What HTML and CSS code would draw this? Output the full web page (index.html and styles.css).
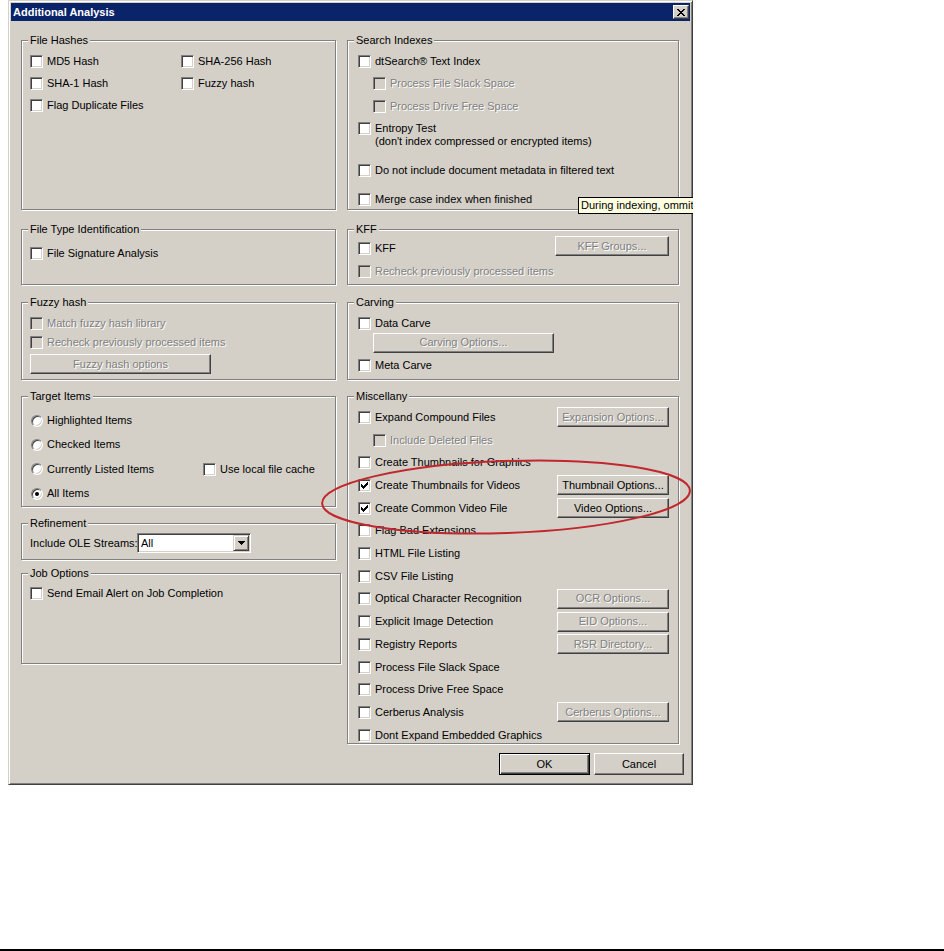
FILE: index.html
```html
<!DOCTYPE html>
<html lang="en">
<head>
    <meta charset="UTF-8">
    <title>Additional Analysis</title>
    <link rel="stylesheet" href="styles.css">
</head>
<body>
    <div class="shot">
        <div class="dialog">
            <div class="titlebar">
                <span class="title">Additional Analysis</span>
                <button class="close" type="button">
                    <svg width="8" height="7" viewBox="0 0 8 7" shape-rendering="crispEdges"><path d="M0 0h2v1H0zM6 0h2v1H6zM1 1h2v1H1zM5 1h2v1H5zM2 2h4v1H2zM3 3h2v1H3zM2 4h4v1H2zM1 5h2v1H1zM5 5h2v1H5zM0 6h2v1H0zM6 6h2v1H6z" fill="#000"/></svg>
                </button>
            </div>

            <div class="body">
                <div class="columns">
                    <!-- left column -->
                    <div class="col col-left">
                        <div class="group hashes">
                            <span class="legend">File Hashes</span>
                            <div class="gbody">
                                <div class="two">
                                    <div class="row"><span class="cb"></span><span class="txt">MD5 Hash</span></div>
                                    <div class="row"><span class="cb"></span><span class="txt">SHA-256 Hash</span></div>
                                    <div class="row"><span class="cb"></span><span class="txt">SHA-1 Hash</span></div>
                                    <div class="row"><span class="cb"></span><span class="txt">Fuzzy hash</span></div>
                                </div>
                                <div class="row"><span class="cb"></span><span class="txt">Flag Duplicate Files</span></div>
                            </div>
                        </div>

                        <div class="group ftype">
                            <span class="legend">File Type Identification</span>
                            <div class="gbody">
                                <div class="row"><span class="cb"></span><span class="txt">File Signature Analysis</span></div>
                            </div>
                        </div>

                        <div class="group fuzzy">
                            <span class="legend">Fuzzy hash</span>
                            <div class="gbody">
                                <div class="row"><span class="cb off"></span><span class="txt dis">Match fuzzy hash library</span></div>
                                <div class="row"><span class="cb off"></span><span class="txt dis">Recheck previously processed items</span></div>
                                <button class="btn dis opt-btn" type="button">Fuzzy hash options</button>
                            </div>
                        </div>

                        <div class="group target">
                            <span class="legend">Target Items</span>
                            <div class="gbody">
                                <div class="row"><span class="radio"></span><span class="txt">Highlighted Items</span></div>
                                <div class="row"><span class="radio"></span><span class="txt">Checked Items</span></div>
                                <div class="row"><span class="radio"></span><span class="txt wide">Currently Listed Items</span><span class="cb"></span><span class="txt">Use local file cache</span></div>
                                <div class="row"><span class="radio on"></span><span class="txt">All Items</span></div>
                            </div>
                        </div>

                        <div class="group refine">
                            <span class="legend">Refinement</span>
                            <div class="gbody">
                                <div class="row">
                                    <span class="field-label">Include OLE Streams:</span>
                                    <div class="combo">
                                        <span class="combo-value">All</span>
                                        <span class="combo-arrow">
                                            <svg width="7" height="4" viewBox="0 0 7 4" shape-rendering="crispEdges"><path d="M0 0h7v1H0zM1 1h5v1H1zM2 2h3v1H2zM3 3h1v1H3z" fill="#000"/></svg>
                                        </span>
                                    </div>
                                </div>
                            </div>
                        </div>

                        <div class="group job">
                            <span class="legend">Job Options</span>
                            <div class="gbody">
                                <div class="row"><span class="cb"></span><span class="txt">Send Email Alert on Job Completion</span></div>
                            </div>
                        </div>
                    </div>

                    <!-- right column -->
                    <div class="col col-right">
                        <div class="group search">
                            <span class="legend">Search Indexes</span>
                            <div class="gbody">
                                <div class="row"><span class="cb"></span><span class="txt">dtSearch® Text Index</span></div>
                                <div class="row indent"><span class="cb off"></span><span class="txt dis">Process File Slack Space</span></div>
                                <div class="row indent"><span class="cb off"></span><span class="txt dis">Process Drive Free Space</span></div>
                                <div class="row multi"><span class="cb"></span><span class="txt">Entropy Test<br>(don't index compressed or encrypted items)</span></div>
                                <div class="row meta"><span class="cb"></span><span class="txt">Do not include document metadata in filtered text</span></div>
                                <div class="row merge"><span class="cb"></span><span class="txt">Merge case index when finished</span></div>
                            </div>
                        </div>

                        <div class="group kff">
                            <span class="legend">KFF</span>
                            <div class="gbody">
                                <div class="split">
                                    <div class="check-top"><span class="cb"></span><span class="txt">KFF</span></div>
                                    <button class="btn dis kff-btn" type="button">KFF Groups...</button>
                                </div>
                                <div class="row"><span class="cb off"></span><span class="txt dis">Recheck previously processed items</span></div>
                            </div>
                        </div>

                        <div class="group carving">
                            <span class="legend">Carving</span>
                            <div class="gbody">
                                <div class="row"><span class="cb"></span><span class="txt">Data Carve</span></div>
                                <button class="btn dis opt-btn" type="button">Carving Options...</button>
                                <div class="row"><span class="cb"></span><span class="txt">Meta Carve</span></div>
                            </div>
                        </div>

                        <div class="group misc">
                            <span class="legend">Miscellany</span>
                            <div class="gbody">
                                <div class="row"><span class="cb"></span><span class="txt">Expand Compound Files</span><button class="btn dis side-btn" type="button">Expansion Options...</button></div>
                                <div class="row indent"><span class="cb off"></span><span class="txt dis">Include Deleted Files</span></div>
                                <div class="row"><span class="cb"></span><span class="txt">Create Thumbnails for Graphics</span></div>
                                <div class="row"><span class="cb"><svg width="11" height="11" viewBox="0 0 11 11" shape-rendering="crispEdges"><path d="M2 4h1v3H2zM3 5h1v3H3zM4 6h1v3H4zM5 5h1v3H5zM6 4h1v3H6zM7 3h1v3H7zM8 2h1v3H8z" fill="#000"/></svg></span><span class="txt">Create Thumbnails for Videos</span><button class="btn side-btn" type="button">Thumbnail Options...</button></div>
                                <div class="row"><span class="cb"><svg width="11" height="11" viewBox="0 0 11 11" shape-rendering="crispEdges"><path d="M2 4h1v3H2zM3 5h1v3H3zM4 6h1v3H4zM5 5h1v3H5zM6 4h1v3H6zM7 3h1v3H7zM8 2h1v3H8z" fill="#000"/></svg></span><span class="txt">Create Common Video File</span><button class="btn side-btn" type="button">Video Options...</button></div>
                                <div class="row"><span class="cb"></span><span class="txt">Flag Bad Extensions</span></div>
                                <div class="row"><span class="cb"></span><span class="txt">HTML File Listing</span></div>
                                <div class="row"><span class="cb"></span><span class="txt">CSV File Listing</span></div>
                                <div class="row"><span class="cb"></span><span class="txt">Optical Character Recognition</span><button class="btn dis side-btn" type="button">OCR Options...</button></div>
                                <div class="row"><span class="cb"></span><span class="txt">Explicit Image Detection</span><button class="btn dis side-btn" type="button">EID Options...</button></div>
                                <div class="row"><span class="cb"></span><span class="txt">Registry Reports</span><button class="btn dis side-btn" type="button">RSR Directory...</button></div>
                                <div class="row"><span class="cb"></span><span class="txt">Process File Slack Space</span></div>
                                <div class="row"><span class="cb"></span><span class="txt">Process Drive Free Space</span></div>
                                <div class="row"><span class="cb"></span><span class="txt">Cerberus Analysis</span><button class="btn dis side-btn" type="button">Cerberus Options...</button></div>
                                <div class="row"><span class="cb"></span><span class="txt">Dont Expand Embedded Graphics</span></div>
                            </div>
                        </div>
                    </div>
                </div>

                <div class="footer">
                    <button class="btn default" type="button">OK</button>
                    <button class="btn" type="button">Cancel</button>
                </div>
            </div>
        </div>

        <div class="tip">During indexing, ommit</div>

        <svg class="ring" width="693" height="785" viewBox="0 0 693 785">
            <ellipse cx="506" cy="497" rx="184" ry="36" transform="rotate(-2 506 497)" fill="none" stroke="#c1272d" stroke-width="2"/>
        </svg>
    </div>

    <div class="rule"></div>
</body>
</html>
```

FILE: styles.css
```css
* {
    box-sizing: border-box;
}

body {
    margin: 0;
    height: 951px;
    display: flex;
    flex-direction: column;
    background: #fff;
    color: #000;
    font-family: "Liberation Sans", Arial, sans-serif;
    font-size: 11px;
    line-height: 13px;
}

.shot {
    position: relative;
    width: 693px;
    overflow: hidden;
}

/* window frame */
.dialog {
    margin-left: 8px;
    width: 685px;
    height: 785px;
    padding: 2px;
    background: #d4d0c8;
    border: 1px solid;
    border-color: #d4d0c8 #404040 #404040 #d4d0c8;
    box-shadow: inset 1px 1px 0 #fff, inset -1px -1px 0 #808080;
}

.titlebar {
    height: 18px;
    display: flex;
    align-items: center;
    padding-left: 2px;
    background: #0a246a;
    color: #fff;
    font-weight: bold;
}

.close {
    margin-left: auto;
    margin-right: 1px;
    width: 16px;
    height: 14px;
    padding: 0;
    display: flex;
    align-items: center;
    justify-content: center;
    background: #d4d0c8;
    border: 1px solid;
    border-color: #fff #404040 #404040 #fff;
    box-shadow: inset -1px -1px 0 #808080;
}

.close svg {
    display: block;
}

.body {
    padding: 19px 0 0 10px;
}

.columns {
    display: flex;
    align-items: flex-start;
    gap: 11px;
}

.col {
    display: flex;
    flex-direction: column;
}

.col-left { width: 315px; }
.col-right { width: 332px; }

/* etched group boxes */
.group {
    border: 1px solid #808080;
    box-shadow: inset 1px 1px 0 #fff, 1px 1px 0 #fff;
}

.legend {
    display: block;
    width: fit-content;
    height: 13px;
    margin: -7px 0 0 6px;
    padding: 0 2px;
    background: #d4d0c8;
}

.gbody {
    padding: 0 9px 0 8px;
}

.col-right .gbody {
    padding-left: 10px;
}

.hashes, .search { height: 170px; }
.ftype, .kff { height: 56px; margin-top: 19px; }
.fuzzy, .carving { height: 78px; margin-top: 17px; }
.target { height: 111px; margin-top: 16px; }
.refine { height: 37px; margin-top: 16px; }
.job { width: 320px; height: 91px; margin-top: 13px; }
.misc { height: 348px; margin-top: 16px; }

/* rows, checkboxes, radios */
.row {
    display: flex;
    align-items: center;
    height: 22px;
    white-space: nowrap;
}

.indent {
    padding-left: 15px;
}

.cb {
    flex: none;
    width: 13px;
    height: 13px;
    background: #fff;
    border: 1px solid;
    border-color: #808080 #fff #fff #808080;
    box-shadow: inset 1px 1px 0 #404040, inset -1px -1px 0 #d4d0c8;
}

.cb svg {
    display: block;
}

.cb.off {
    background: #d4d0c8;
}

.radio {
    flex: none;
    position: relative;
    width: 12px;
    height: 12px;
    margin-left: 1px;
    border-radius: 50%;
    background: #fff;
    border: 1px solid;
    border-color: #808080 #fff #fff #808080;
    box-shadow: inset 1px 1px 0 #404040, inset -1px -1px 0 #d4d0c8;
}

.radio.on::after {
    content: '';
    position: absolute;
    left: 3px;
    top: 3px;
    width: 4px;
    height: 4px;
    border-radius: 50%;
    background: #000;
}

.txt {
    margin-left: 4px;
}

.dis {
    color: #808080;
    text-shadow: 1px 1px 0 #fff;
}

/* buttons */
.btn {
    height: 20px;
    padding: 0;
    background: #d4d0c8;
    color: #000;
    font: inherit;
    text-align: center;
    white-space: nowrap;
    border: 1px solid;
    border-color: #fff #404040 #404040 #fff;
    box-shadow: inset -1px -1px 0 #808080;
}

.btn.dis {
    color: #808080;
}

.opt-btn {
    display: block;
    width: 181px;
}

.side-btn {
    margin-left: auto;
    width: 112px;
}

/* per group spacing */
.hashes .gbody { padding-top: 3px; }

.two {
    display: grid;
    grid-template-columns: 151px auto;
}

.ftype .gbody { padding-top: 6px; }

.fuzzy .gbody { padding-top: 4.5px; }
.fuzzy .row { height: 19px; }
.fuzzy .opt-btn { margin-top: 2.5px; }

.target .gbody { padding-top: 5.5px; }
.target .row { height: 24.3px; }
.target .wide { width: 156px; }

.refine .gbody { padding-top: 3px; }
.refine .row { height: 20px; }

.field-label {
    width: 107px;
}

.combo {
    display: flex;
    width: 114px;
    height: 20px;
    padding: 1px;
    background: #fff;
    border: 1px solid;
    border-color: #808080 #fff #fff #808080;
    box-shadow: inset 1px 1px 0 #404040, inset -1px -1px 0 #d4d0c8;
}

.combo-value {
    flex: 1;
    padding-left: 2px;
    line-height: 16px;
}

.combo-arrow {
    width: 16px;
    height: 16px;
    display: flex;
    align-items: center;
    justify-content: center;
    background: #d4d0c8;
    border: 1px solid;
    border-color: #d4d0c8 #404040 #404040 #d4d0c8;
    box-shadow: inset 1px 1px 0 #fff, inset -1px -1px 0 #808080;
}

.combo-arrow svg {
    display: block;
}

.job .gbody { padding-top: 2px; }

.search .gbody { padding-top: 3px; }
.search .row { height: 22.5px; }
.search .multi {
    height: auto;
    align-items: flex-start;
    margin-top: 4px;
}
.search .meta { margin-top: 11.5px; }
.search .merge { margin-top: 7px; }

.split {
    display: flex;
    align-items: flex-start;
}

.check-top {
    display: flex;
    align-items: center;
    margin-top: 6px;
}

.kff-btn {
    margin-left: auto;
    width: 114px;
}

.kff .row { margin-top: 4px; }

.carving .gbody { padding-top: 4.5px; }
.carving .row:first-child { height: 19px; }
.carving .opt-btn { margin-left: 15px; }
.carving .opt-btn + .row { margin-top: 2px; }

.misc .gbody { padding-top: 3px; }
.misc .row { height: 22.71px; }

.footer {
    display: flex;
    justify-content: flex-end;
    gap: 4px;
    margin-top: 9px;
    padding-right: 6px;
}

.footer .btn {
    width: 90px;
    height: 22px;
}

.footer .default {
    width: 91px;
    border-color: #000;
    box-shadow: inset 1px 1px 0 #fff, inset -1px -1px 0 #404040, inset -2px -2px 0 #808080;
}

/* overlays */
.tip {
    position: absolute;
    left: 578px;
    top: 197px;
    height: 17px;
    padding: 1px 2px 0;
    background: #ffffe1;
    border: 1px solid #000;
    white-space: nowrap;
}

.ring {
    position: absolute;
    left: 0;
    top: 0;
    pointer-events: none;
}

.rule {
    margin-top: auto;
    height: 2px;
    background: #000;
}
```
